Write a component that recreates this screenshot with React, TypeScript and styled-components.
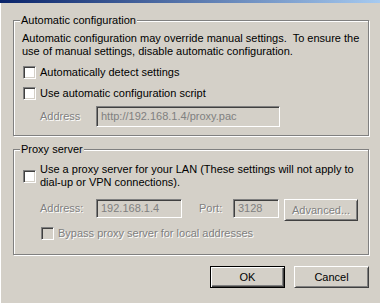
import React from 'react';
import styled, { createGlobalStyle } from 'styled-components';

const GlobalStyle = createGlobalStyle`
  html, body {
    margin: 0;
    padding: 0;
    background: #d4d0c8;
  }
  body {
    font-family: "Liberation Sans", Arial, sans-serif;
    font-size: 11px;
    color: #000;
  }
`;

const Window = styled.div`
  width: 380px;
  height: 303px;
  background: #d4d0c8;
  display: flex;
  flex-direction: column;
  overflow: hidden;
`;

const TitleStrip = styled.div`
  height: 3px;
  flex-shrink: 0;
  background: linear-gradient(90deg, #0a246a, #a6caf0);
`;

const Body = styled.div`
  flex: 1;
  display: flex;
  flex-direction: column;
  padding: 0 11px 0 12px;
  border-left: 1px solid #fff;
`;

const Group = styled.fieldset<{ $top: number; $bottom: number }>`
  margin: ${(p) => p.$top}px 0 0 0;
  padding: 0 8px ${(p) => p.$bottom}px 8px;
  border: 1px solid #808080;
  box-shadow: 1px 1px 0 #fff, inset 1px 1px 0 #fff;
  min-width: 0;
`;

const Legend = styled.legend`
  margin-left: -2px;
  padding: 0 1px;
  line-height: 13px;
  background: #d4d0c8;
`;

const Desc = styled.div`
  margin-top: 5px;
  line-height: 13px;
`;

const CheckRow = styled.div<{ $top: number; $indent?: number }>`
  display: flex;
  align-items: center;
  gap: 4px;
  margin-top: ${(p) => p.$top}px;
  padding-left: ${(p) => p.$indent ?? 1}px;
  line-height: 13px;
`;

const Box = styled.span<{ $disabled?: boolean }>`
  box-sizing: border-box;
  width: 13px;
  height: 13px;
  flex-shrink: 0;
  border: 1px solid;
  border-color: #808080 #fff #fff #808080;
  box-shadow: inset 1px 1px 0 #404040, inset -1px -1px 0 #d4d0c8;
  background: ${(p) => (p.$disabled ? '#d4d0c8' : '#fff')};
`;

const Label = styled.span<{ $disabled?: boolean; $width?: number }>`
  color: ${(p) => (p.$disabled ? '#808080' : '#000')};
  text-shadow: ${(p) => (p.$disabled ? '1px 1px 0 #fff' : 'none')};
  width: ${(p) => (p.$width ? `${p.$width}px` : 'auto')};
  flex-shrink: 0;
  white-space: nowrap;
`;

const FieldRow = styled.div<{ $top: number }>`
  display: flex;
  align-items: flex-start;
  margin-top: ${(p) => p.$top}px;
  padding-left: 18px;
  line-height: 13px;
`;

const LabelCell = styled.div<{ $height: number }>`
  display: flex;
  align-items: center;
  height: ${(p) => p.$height}px;
`;

const Field = styled.div<{ $width: number; $height: number }>`
  box-sizing: border-box;
  width: ${(p) => p.$width}px;
  height: ${(p) => p.$height}px;
  border: 1px solid;
  border-color: #808080 #fff #fff #808080;
  box-shadow: inset 1px 1px 0 #404040, inset -1px -1px 0 #d4d0c8;
  background: #d4d0c8;
  color: #808080;
  padding-left: 4px;
  display: flex;
  align-items: center;
  white-space: nowrap;
  overflow: hidden;
`;

const Button = styled.div<{ $width: number; $height: number; $default?: boolean; $disabled?: boolean; $left?: number }>`
  box-sizing: border-box;
  width: ${(p) => p.$width}px;
  height: ${(p) => p.$height}px;
  margin-left: ${(p) => p.$left ?? 0}px;
  display: flex;
  align-items: center;
  justify-content: center;
  background: #d4d0c8;
  border: 1px solid ${(p) => (p.$default ? '#000' : '#d4d0c8')};
  box-shadow: ${(p) =>
    p.$default
      ? 'inset 1px 1px 0 #fff, inset -1px -1px 0 #404040, inset -2px -2px 0 #808080'
      : 'inset 0 0 0 0 transparent'};
  ${(p) =>
    !p.$default &&
    `border-color: #fff #404040 #404040 #fff;
     box-shadow: inset 1px 1px 0 #d4d0c8, inset -1px -1px 0 #808080;`}
  color: ${(p) => (p.$disabled ? '#808080' : '#000')};
  text-shadow: ${(p) => (p.$disabled ? '1px 1px 0 #fff' : 'none')};
  flex-shrink: 0;
`;

const ButtonBar = styled.div`
  display: flex;
  justify-content: flex-end;
  gap: 9px;
  margin-top: 11px;
`;

export default function App() {
  return (
    <>
      <GlobalStyle />
      <Window>
        <TitleStrip />
        <Body>
          <Group $top={11} $bottom={8}>
            <Legend>Automatic configuration</Legend>
            <Desc>
              Automatic configuration may override manual settings.&nbsp; To ensure the
              <br />
              use of manual settings, disable automatic configuration.
            </Desc>
            <CheckRow $top={8}>
              <Box />
              <Label>Automatically detect settings</Label>
            </CheckRow>
            <CheckRow $top={8}>
              <Box />
              <Label>Use automatic configuration script</Label>
            </CheckRow>
            <FieldRow $top={6}>
              <LabelCell $height={21}>
                <Label $disabled $width={56}>Address</Label>
              </LabelCell>
              <Field $width={184} $height={21}>http://192.168.1.4/proxy.pac</Field>
            </FieldRow>
          </Group>

          <Group $top={7} $bottom={14}>
            <Legend>Proxy server</Legend>
            <CheckRow $top={7}>
              <Box />
              <Label>
                Use a proxy server for your LAN (These settings will not apply to
                <br />
                dial-up or VPN connections).
              </Label>
            </CheckRow>
            <FieldRow $top={10}>
              <LabelCell $height={19}>
                <Label $disabled $width={56}>Address:</Label>
              </LabelCell>
              <Field $width={86} $height={19}>192.168.1.4</Field>
              <LabelCell $height={19} style={{ marginLeft: 17 }}>
                <Label $disabled $width={34}>Port:</Label>
              </LabelCell>
              <Field $width={46} $height={19}>3128</Field>
              <Button $width={74} $height={22} $left={5} $disabled>
                Advanced...
              </Button>
            </FieldRow>
            <CheckRow $top={6} $indent={19}>
              <Box $disabled />
              <Label $disabled>Bypass proxy server for local addresses</Label>
            </CheckRow>
          </Group>

          <ButtonBar>
            <Button $width={75} $height={22} $default>
              OK
            </Button>
            <Button $width={75} $height={22}>
              Cancel
            </Button>
          </ButtonBar>
        </Body>
      </Window>
    </>
  );
}
